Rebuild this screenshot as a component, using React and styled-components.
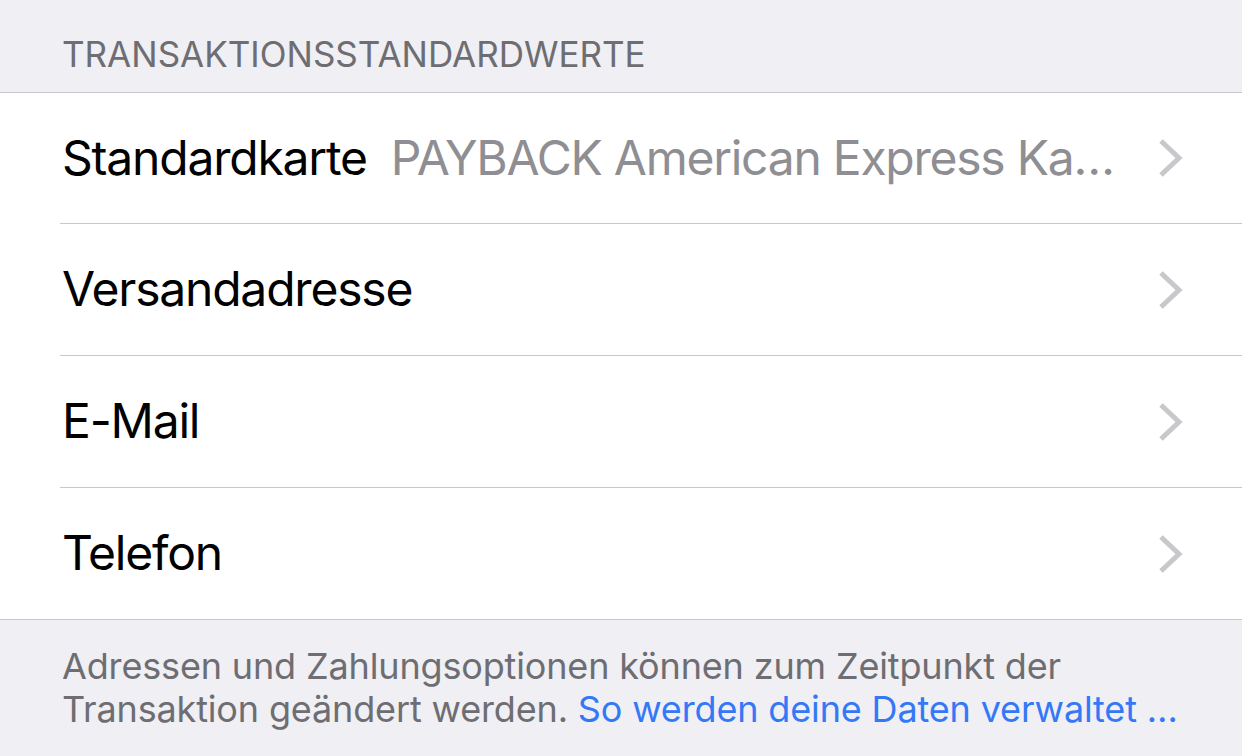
import React from 'react';
import styled, {createGlobalStyle} from "styled-components"

const GlobalStyle = createGlobalStyle`
  html, body {
    margin: 0;
    padding: 0;
    background: #efeff4;
  }
  body {
    font-family: Inter, "Noto Sans", sans-serif;
    -webkit-font-smoothing: antialiased;
  }
`;

const rows = [
    {label: "Standardkarte", value: "PAYBACK American Express Karte"},
    {label: "Versandadresse"},
    {label: "E-Mail"},
    {label: "Telefon"},
]

function Chevron(){
    return(
        <ChevronIcon width="26" height="40" viewBox="0 0 26 40">
            <path d="M3 3 L21 20 L3 37" fill="none" stroke="#c7c7cc" strokeWidth="5" strokeLinecap="butt" strokeLinejoin="miter"/>
        </ChevronIcon>
    )
}

export default function App(){
    return(
        <Page>
            <GlobalStyle/>
            <SectionHeader>TRANSAKTIONSSTANDARDWERTE</SectionHeader>
            <Group>
                {rows.map((r, i) => (
                    <Row key={r.label} edge={i === 0 || i === rows.length - 1} last={i === rows.length - 1}>
                        <Label>{r.label}</Label>
                        <Value>{r.value}</Value>
                        <Chevron/>
                    </Row>
                ))}
            </Group>
            <Footer>
                Adressen und Zahlungsoptionen können zum Zeitpunkt der<br/>
                Transaktion geändert werden. <FooterLink>So werden deine Daten verwaltet …</FooterLink>
            </Footer>
        </Page>
    )
}


// STYLED COMPONENT
const Page = styled.div`
    width: 1242px;
    height: 756px;
    overflow: hidden;
    background: #efeff4;
`;

const SectionHeader = styled.div`
    height: 93px;
    box-sizing: border-box;
    padding: 33px 62px 0;
    font-size: 35px;
    line-height: 42px;
    color: #6d6d72;
    border-bottom: 1px solid #c8c7cc;
`;

const Group = styled.div`
    background: #fff;
    border-bottom: 1px solid #c8c7cc;
`;

const Row = styled.div`
    height: ${p => p.edge ? "131px" : "132px"};
    box-sizing: border-box;
    display: flex;
    align-items: center;
    margin-left: 60px;
    padding: 0 60px 0 2px;
    border-bottom: ${p => p.last ? "none" : "1px solid #c8c7cc"};
`;

const Label = styled.span`
    font-size: 48px;
    letter-spacing: -1.2px;
    color: #000;
    white-space: nowrap;
    flex-shrink: 0;
    margin-bottom: 2px;
`;

const Value = styled.span`
    flex: 1;
    min-width: 0;
    margin: 0 30px 2px 24px;
    font-size: 48px;
    letter-spacing: -1.25px;
    color: #8e8e93;
    white-space: nowrap;
    overflow: hidden;
    text-overflow: ellipsis;
`;

const ChevronIcon = styled.svg`
    flex-shrink: 0;
    display: block;
    margin-right: -2px;
`;

const Footer = styled.div`
    padding: 25px 30px 0 62px;
    font-size: 36px;
    letter-spacing: -0.15px;
    line-height: 43px;
    color: #6d6d72;
    white-space: nowrap;
`;

const FooterLink = styled.span`
    color: #3478f6;
`;
